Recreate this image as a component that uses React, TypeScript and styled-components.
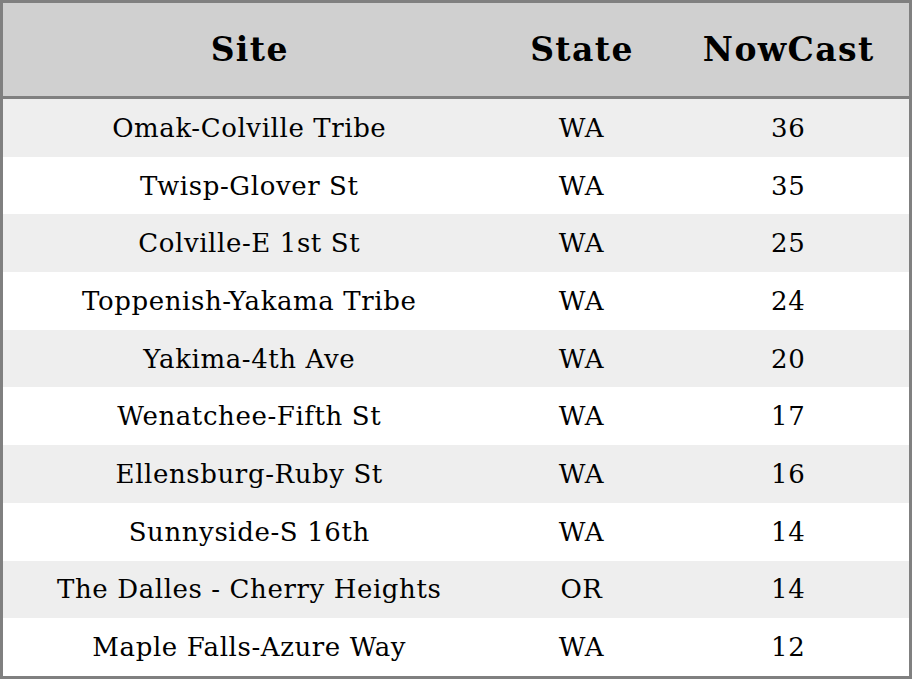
import styled, { createGlobalStyle } from "styled-components";

type Reading = {
  site: string;
  state: string;
  nowcast: number;
};

const readings: Reading[] = [
  { site: "Omak-Colville Tribe", state: "WA", nowcast: 36 },
  { site: "Twisp-Glover St", state: "WA", nowcast: 35 },
  { site: "Colville-E 1st St", state: "WA", nowcast: 25 },
  { site: "Toppenish-Yakama Tribe", state: "WA", nowcast: 24 },
  { site: "Yakima-4th Ave", state: "WA", nowcast: 20 },
  { site: "Wenatchee-Fifth St", state: "WA", nowcast: 17 },
  { site: "Ellensburg-Ruby St", state: "WA", nowcast: 16 },
  { site: "Sunnyside-S 16th", state: "WA", nowcast: 14 },
  { site: "The Dalles - Cherry Heights", state: "OR", nowcast: 14 },
  { site: "Maple Falls-Azure Way", state: "WA", nowcast: 12 },
];

const GlobalStyle = createGlobalStyle`
  html, body {
    margin: 0;
    padding: 0;
    background: #ffffff;
  }
`;

export default function App() {
  return (
    <>
      <GlobalStyle />
      <Table>
        <colgroup>
          <col style={{ width: 494 }} />
          <col style={{ width: 172 }} />
          <col />
        </colgroup>
        <thead>
          <tr>
            <HeadCell>Site</HeadCell>
            <HeadCell>State</HeadCell>
            <HeadCell>NowCast</HeadCell>
          </tr>
        </thead>
        <tbody>
          {readings.map((r, i) => (
            <Row key={r.site} $shaded={i % 2 === 0}>
              <Cell>{r.site}</Cell>
              <Cell>{r.state}</Cell>
              <Cell>{r.nowcast}</Cell>
            </Row>
          ))}
        </tbody>
      </Table>
    </>
  );
}

const Table = styled.table`
  width: 912px;
  height: 679px;
  border: 3px solid #808080;
  border-collapse: collapse;
  table-layout: fixed;
  font-family: "DejaVu Serif", "Liberation Serif", serif;
  color: #000;
`;

const HeadCell = styled.th`
  height: 93px;
  padding: 0 0 0 1px;
  background: #d0d0d0;
  border-bottom: 3px solid #808080;
  font-size: 33px;
  font-weight: bold;
  letter-spacing: 1.4px;
  text-align: center;
  vertical-align: middle;
`;

const Row = styled.tr<{ $shaded: boolean }>`
  background: ${(p) => (p.$shaded ? "#eeeeee" : "#ffffff")};
`;

const Cell = styled.td`
  height: 57px;
  padding: 0;
  font-size: 26px;
  letter-spacing: 0.6px;
  text-align: center;
  vertical-align: middle;
`;
